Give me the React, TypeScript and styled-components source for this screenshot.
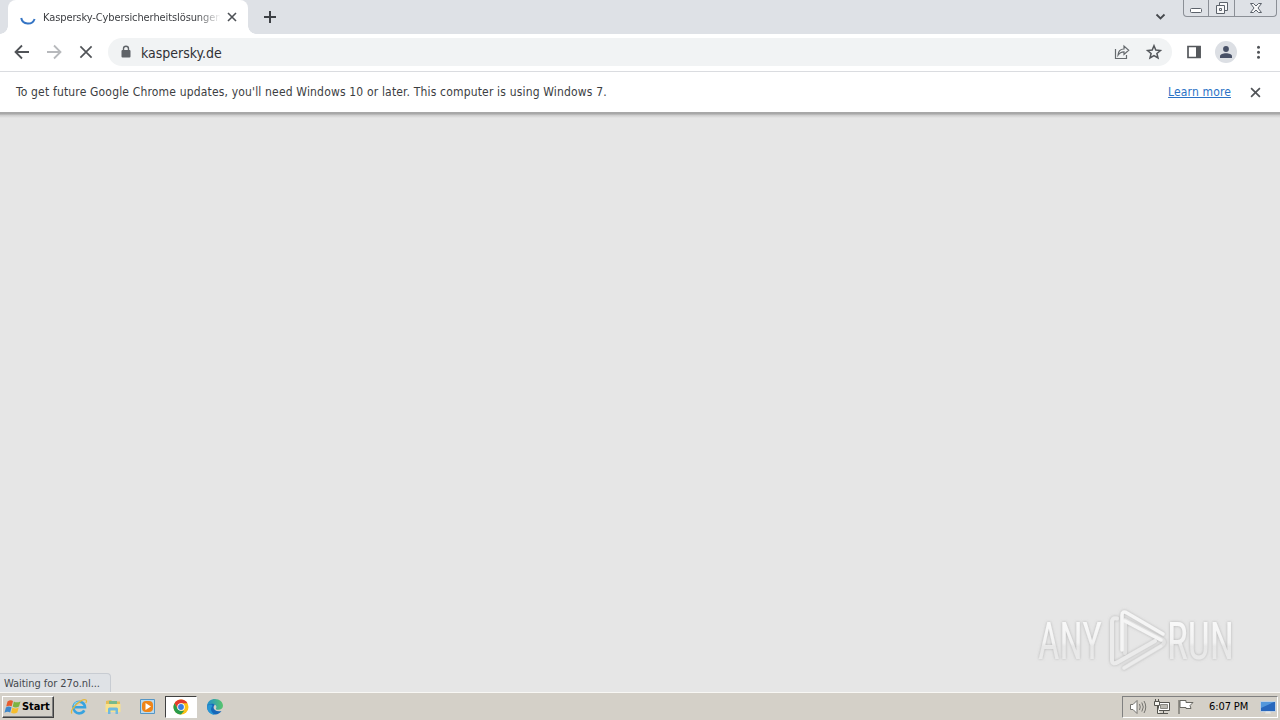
import React from "react";
import styled, { createGlobalStyle } from "styled-components";

const GlobalStyle = createGlobalStyle`
  * {
    box-sizing: border-box;
  }

  body {
    margin: 0;
    overflow: hidden;
    font-family: "DejaVu Sans Condensed", "DejaVu Sans", sans-serif;
    font-stretch: condensed;
  }

  svg {
    display: block;
    flex: none;
  }
`;

const Screen = styled.div`
  display: flex;
  flex-direction: column;
  width: 1280px;
  height: 720px;
  background: #e6e6e6;
`;

const Label = styled.span<{ size: number; spacing: number; color?: string }>`
  font-size: ${({ size }) => size}px;
  letter-spacing: ${({ spacing }) => spacing}px;
  color: ${({ color }) => color || "#3c3e42"};
  line-height: 16px;
  white-space: nowrap;
`;

const TabStrip = styled.header`
  display: flex;
  flex: none;
  height: 34px;
  padding-left: 8px;
  background: #dee1e6;
`;

const Tab = styled.div`
  position: relative;
  display: flex;
  align-items: center;
  width: 240px;
  height: 34px;
  padding: 0 9px 0 12px;
  border-radius: 8px 8px 0 0;
  background: #fff;

  &::before,
  &::after {
    content: "";
    position: absolute;
    bottom: 0;
    width: 8px;
    height: 8px;
  }

  &::before {
    left: -8px;
    background: radial-gradient(circle at 0 0, #dee1e6 7.5px, #fff 8px);
  }

  &::after {
    right: -8px;
    background: radial-gradient(circle at 100% 0, #dee1e6 7.5px, #fff 8px);
  }
`;

const TabTitle = styled.div`
  display: flex;
  flex: none;
  width: 177px;
  margin: 0 7px 0 7px;
  padding-top: 1px;
  overflow: hidden;
  mask-image: linear-gradient(90deg, #000 154px, transparent 178px);
`;

const NewTab = styled.div`
  margin: 10px 0 0 15px;
`;

const TabSearch = styled.div`
  margin: 13px 17px 0 auto;
`;

const WindowButtons = styled.div`
  display: flex;
  width: 94px;
  height: 17px;
  margin-right: 3px;
  border: 1px solid #8b8f96;
  border-top: 0;
  border-radius: 0 0 4px 4px;
`;

const WindowButton = styled.div<{ width: number }>`
  display: flex;
  justify-content: center;
  width: ${({ width }) => width}px;

  & + & {
    border-left: 1px solid #8b8f96;
  }
`;

const Toolbar = styled.nav`
  display: flex;
  flex: none;
  align-items: center;
  height: 38px;
  padding: 0 12px 1px;
  border-bottom: 1px solid #dadce0;
  background: #fff;
`;

const NavButton = styled.div`
  display: flex;
  justify-content: center;
  width: 20px;
  margin-right: 12px;
`;

const Omnibox = styled.div`
  display: flex;
  align-items: center;
  width: 1064px;
  height: 28px;
  padding: 0 9px 0 12px;
  border-radius: 14px;
  background: #f1f3f4;
`;

const Address = styled.div`
  display: flex;
  flex: 1;
  margin-left: 9px;
  padding-top: 2px;
`;

const OmniboxActions = styled.div`
  display: flex;
  gap: 14px;
`;

const ToolbarActions = styled.div`
  display: flex;
  align-items: center;
  margin-left: 14px;
`;

const Avatar = styled.div`
  display: flex;
  align-items: center;
  justify-content: center;
  width: 22px;
  height: 22px;
  margin: 0 14px;
  border-radius: 50%;
  background: #dcdfe4;
`;

const InfoBar = styled.section`
  display: flex;
  flex: none;
  align-items: center;
  justify-content: space-between;
  height: 40px;
  padding: 0 19px 0 16px;
  background: #fff;
`;

const InfoActions = styled.div`
  display: flex;
  align-items: center;
  gap: 19px;
`;

const LearnMore = styled.a`
  color: #2a72c6;
  font-size: 12px;
  letter-spacing: 0.14px;
  line-height: 16px;
  text-decoration: underline;
  white-space: nowrap;
`;

const Page = styled.main`
  display: flex;
  flex: 1;
  flex-direction: column;
  justify-content: flex-end;
  background: linear-gradient(#a8a8a8 0, #a8a8a8 2px, #cbcbcb 3px, #e6e6e6 6px);
`;

const Watermark = styled.div`
  align-self: flex-end;
`;

const StatusBubble = styled.div`
  display: flex;
  align-items: center;
  width: 111px;
  height: 19px;
  padding: 1px 0 0 4px;
  border: 1px solid #c8ccd2;
  border-width: 1px 1px 0 0;
  border-radius: 0 4px 0 0;
  background: #dfe2e6;
`;

const Taskbar = styled.footer`
  display: flex;
  flex: none;
  align-items: center;
  height: 28px;
  padding: 0 2px;
  border-top: 1px solid #f8f7f4;
  background: #d4d0c8;
`;

const StartButton = styled.div`
  display: flex;
  align-items: center;
  width: 52px;
  height: 22px;
  padding-left: 1px;
  border: 1px solid;
  border-color: #fff #404040 #404040 #fff;
  box-shadow: inset -1px -1px #808080;
`;

const StartText = styled.span`
  color: #000;
  font-size: 11px;
  font-weight: 700;
  letter-spacing: -0.1px;
`;

const QuickLaunch = styled.div`
  display: flex;
  margin-left: 8px;
`;

const TaskButton = styled.div<{ active?: boolean }>`
  display: flex;
  align-items: center;
  justify-content: center;
  width: 34px;
  height: 22px;

  ${({ active }) =>
    active &&
    `
    width: 32px;
    margin: 0 1px;
    border: 1px solid;
    border-color: #404040 #fff #fff #404040;
    background: #fff;
  `}
`;

const Tray = styled.div`
  display: flex;
  align-items: center;
  width: 156px;
  height: 22px;
  margin-left: auto;
  padding-left: 6px;
  border: 1px solid;
  border-color: #808080 #fff #fff #808080;
`;

const TrayIcons = styled.div`
  display: flex;
  width: 80px;
  gap: 7px;
`;

const Clock = styled.div`
  display: flex;
  width: 51px;
`;

const CloseIcon = ({ size = 10, color = "#4d5156", width = 1.8 }) => (
  <svg width={size} height={size} viewBox="0 0 10 10" stroke={color} strokeWidth={width}>
    <path d="M1 1l8 8M9 1L1 9" />
  </svg>
);

const Spinner = () => (
  <svg width="16" height="16" viewBox="0 0 16 16" fill="none" stroke="#3474c4" strokeWidth="2">
    <path d="M1.2 9A7 7 0 0 0 14.6 10" />
  </svg>
);

const Arrow = ({ forward }: { forward?: boolean }) => (
  <svg
    width="16"
    height="16"
    viewBox="0 0 16 16"
    fill="none"
    stroke={forward ? "#b7b9bc" : "#505357"}
    strokeWidth="1.8"
  >
    <path d={forward ? "M1 8h13M8 1.5L14.5 8 8 14.5" : "M15 8H2M8 1.5L1.5 8 8 14.5"} />
  </svg>
);

const LockIcon = () => (
  <svg width="12" height="14" viewBox="0 0 12 14">
    <path d="M3.5 6V3.7a2.5 2.5 0 0 1 5 0V6" fill="none" stroke="#5f6368" strokeWidth="1.4" />
    <rect x="1.5" y="5" width="9" height="7.5" rx="1" fill="#5f6368" />
  </svg>
);

const ShareIcon = () => (
  <svg width="18" height="18" viewBox="0 0 18 18" fill="none" stroke="#666a6e" strokeWidth="1.2">
    <path d="M2.5 6v9.5h11V12" />
    <path d="M5 12.2C5.2 8 7.5 6 11 6V3l4.7 4.2L11 11.5V8.8C8.5 8.8 6.5 9.8 5 12.2z" />
  </svg>
);

const StarIcon = () => (
  <svg width="18" height="18" viewBox="0 0 18 18" fill="none" stroke="#53565a" strokeWidth="1.5">
    <path d="M9 2.8l1.8 4.3 4.6.4-3.5 3 1.1 4.5L9 12.6 5 15l1.1-4.5-3.5-3 4.6-.4z" />
  </svg>
);

const SidePanelIcon = () => (
  <svg width="15" height="14" viewBox="0 0 15 14">
    <path d="M2 1.5h12v11H2z" fill="none" stroke="#55585c" strokeWidth="1.7" />
    <path d="M10 1h4.7v12H10z" fill="#55585c" />
  </svg>
);

const PersonIcon = () => (
  <svg width="14" height="14" viewBox="0 0 14 14" fill="#475066">
    <circle cx="7" cy="4" r="2.9" />
    <path d="M1 13v-1.7c0-2 3-3 6-3s6 1 6 3V13z" />
  </svg>
);

const MenuIcon = () => (
  <svg width="14" height="16" viewBox="0 0 14 16" fill="#505357">
    <circle cx="7.5" cy="3.3" r="1.5" />
    <circle cx="7.5" cy="8.3" r="1.5" />
    <circle cx="7.5" cy="13.3" r="1.5" />
  </svg>
);

const AnyRunLogo = () => (
  <svg width="246" height="72" viewBox="0 0 246 72">
    <defs>
      <linearGradient id="letters" x1="0" y1="0" x2="0" y2="1">
        <stop offset="0.2" stopColor="#f8f8f8" />
        <stop offset="0.52" stopColor="#f2f2f2" />
        <stop offset="0.58" stopColor="#e7e7e7" />
        <stop offset="0.9" stopColor="#ebebeb" />
      </linearGradient>
      <filter id="glow" x="-10%" y="-20%" width="120%" height="140%">
        <feDropShadow dx="0" dy="0" stdDeviation="1.7" floodColor="#888" floodOpacity="0.55" />
      </filter>
    </defs>
    <g filter="url(#glow)">
      <g fill="url(#letters)" fontFamily="Roboto, sans-serif" fontSize="51">
        <text x="4" y="58" textLength="64" lengthAdjust="spacingAndGlyphs">
          ANY
        </text>
        <text x="133" y="58" textLength="67" lengthAdjust="spacingAndGlyphs">
          RUN
        </text>
      </g>
      <g fill="none" strokeLinecap="round" strokeLinejoin="round">
        <path d="M83 17.5c-4-1-5 1-5 4V59c0 4 3 4 6 2l37-21" stroke="#ebebeb" strokeWidth="4" />
        <path d="M90 67l37-22c4-3 4-5 0-7L91 19v33" stroke="#e2e2e2" strokeWidth="4" />
        <path d="M88 49V14c0-3 2-4 5-2l36 21M91 20l36 19" stroke="#f5f5f5" strokeWidth="3.5" />
        <path d="M90 67l37-22" stroke="#ececec" strokeWidth="3" />
      </g>
    </g>
  </svg>
);

const WindowsFlag = () => (
  <svg width="18" height="16" viewBox="0 0 17 16">
    <path d="M3 2.5Q6 .5 8.5 2L7.2 7.2Q4.5 6 1.7 7.6z" fill="#e65c2e" />
    <path d="M9.4 2.4Q12 4.2 16 2.4l-1.5 5.2q-3.5 1.8-6.3 0z" fill="#7cb342" />
    <path d="M1.4 8.5Q4 6.8 7 8.3L5.7 13.4Q3 12 0 13.7z" fill="#3d87cb" />
    <path d="M7.9 8.6q3 1.7 6.3 0l-1.4 5q-3.4 1.8-6.2.1z" fill="#f6bd2d" />
  </svg>
);

const ExplorerIcon = () => (
  <svg width="18" height="18" viewBox="0 0 18 18" fill="none">
    <path d="M14.3 12.3A5.8 5.8 0 1 1 15 9.3H5" stroke="#38a3df" strokeWidth="2.6" />
    <path d="M4 7.8A5 5 0 0 1 9 4" stroke="#8bd7f7" strokeWidth="1.2" />
    <path d="M2 15.5C-1 12 12-.5 16 2c1 .7.4 2-.2 3" stroke="#e4b83e" strokeWidth="1.3" />
  </svg>
);

const FolderIcon = () => (
  <svg width="18" height="18" viewBox="0 0 18 18">
    <path d="M2 3l5-1 1.5 1.5H16V14H2z" fill="#e5bd57" />
    <path d="M5 3h8v4H5z" fill="#78b98b" />
    <path d="M1.5 6h15v8h-15z" fill="#f8e28e" />
    <path d="M4 16v-5q0-1.5 1.5-1.5h7Q14 9.5 14 11v5h-2.5v-3.5h-5V16z" fill="#70b9df" />
  </svg>
);

const MediaIcon = () => (
  <svg width="18" height="18" viewBox="0 0 18 18">
    <path d="M2.5 1.5h14v14h-14z" fill="#b9daf0" stroke="#5596c5" />
    <rect x="4" y="3" width="11" height="11" rx="4" fill="#ef8519" />
    <path d="M7.5 5l5.5 3.5L7.5 12z" fill="#fff" />
  </svg>
);

const ChromeIcon = () => (
  <svg width="16" height="16" viewBox="0 0 16 16">
    <circle cx="8" cy="8" r="7.5" fill="#fbc116" />
    <path d="M1.5 4.2A7.5 7.5 0 0 1 14.5 4.2H8L4.8 9.9z" fill="#e33b2e" />
    <path d="M1.5 4.2l3.3 5.7L8 11.7h3.2L8 15.5A7.5 7.5 0 0 1 1.5 4.2z" fill="#299b4b" />
    <circle cx="8" cy="8" r="3.8" fill="#fff" />
    <circle cx="8" cy="8" r="2.9" fill="#397de1" />
  </svg>
);

const EdgeIcon = () => (
  <svg width="18" height="18" viewBox="0 0 18 18">
    <defs>
      <linearGradient id="edgeTop" x1="0" x2="1">
        <stop stopColor="#238fcf" />
        <stop offset="1" stopColor="#58c56b" />
      </linearGradient>
    </defs>
    <path d="M1 9c0-5 5-6 8-3L7.5 9c0 3 3 5 8 4A8 8 0 0 1 1 9z" fill="#1767b8" />
    <path
      d="M1 8C1.4 3.5 4.8 1 9 1c4.7 0 8 3.2 8 6.8 0 2.7-2.2 4-4.5 4-2 0-3-.6-2.5-1.4C11.5 8.2 9 5.8 6 5.8 3.4 5.8 1.5 7 1 8z"
      fill="url(#edgeTop)"
    />
    <path d="M6.5 8c-3 3-1 7 2.7 8.8C4 17 1 13 1.2 8.5 3 6 6 6 6.5 8z" fill="#2796d5" />
  </svg>
);

const SpeakerIcon = () => (
  <svg width="18" height="18" viewBox="0 0 18 18" fill="none" stroke="#74736f">
    <path d="M1.5 6.5H4l4-4v13l-4-4H1.5z" fill="#fff" />
    <path d="M10.5 6q1.5 3 0 6M12.8 4.5q3 4.5 0 9M15 3q3.5 6 0 12" />
  </svg>
);

const NetworkIcon = () => (
  <svg width="16" height="18" viewBox="0 0 16 18" fill="none" stroke="#55544f">
    <path d="M4.5 4.5h11v8h-11z" fill="#fff" />
    <path d="M6.5 6.5h7v4h-7z" fill="#bbb9b2" stroke="#8a8983" />
    <path d="M9.5 13v2M6 15.5h8" />
    <path d="M.5 3.5h5v4h-5zM1.5 1v2M4.5 1v2M3.5 8v7.5H6" fill="#f6f5f0" />
  </svg>
);

const FlagIcon = () => (
  <svg width="18" height="18" viewBox="0 0 18 18" fill="#fff" stroke="#696862">
    <path d="M2 2v14" strokeWidth="1.2" />
    <path d="M3 2.5h6v2h7l-3 3 1 3H9v-1H3z" />
  </svg>
);

const DesktopIcon = () => (
  <svg width="16" height="16" viewBox="0 0 16 16">
    <path d="M.5 2.5h15v10H.5z" fill="#2867bd" stroke="#d9e4ef" strokeWidth=".7" />
    <path d="M1 3h13L1 9z" fill="#5397dc" />
    <path d="M6 12.5h4l1 2H5z" fill="#e5e5e3" />
  </svg>
);

const App: React.FC = () => {
  return (
    <Screen>
      <GlobalStyle />
      <TabStrip>
        <Tab>
          <Spinner />
          <TabTitle>
            <Label size={11} spacing={-0.1}>
              Kaspersky-Cybersicherheitslösungen
            </Label>
          </TabTitle>
          <CloseIcon width={1.6} />
        </Tab>
        <NewTab>
          <svg width="14" height="14" viewBox="0 0 14 14" stroke="#3d4045" strokeWidth="2">
            <path d="M7 1v12M1 7h12" />
          </svg>
        </NewTab>
        <TabSearch>
          <svg width="11" height="8" viewBox="0 0 11 8" fill="none" stroke="#45484d" strokeWidth="1.8">
            <path d="M1.5 1.5l4 4 4-4" />
          </svg>
        </TabSearch>
        <WindowButtons>
          <WindowButton width={24}>
            <svg width="14" height="16" viewBox="0 0 14 16">
              <rect x="1.5" y="8.5" width="11" height="4" rx="1" fill="#fff" stroke="#5c626b" />
            </svg>
          </WindowButton>
          <WindowButton width={26}>
            <svg width="14" height="16" viewBox="0 0 14 16" fill="#f8f8f9" stroke="#5c626b">
              <path d="M4.5 2.5h8v8h-8z" />
              <path d="M1.5 5.5h8v8h-8z" />
              <path d="M4.5 8.5h2v2h-2z" />
            </svg>
          </WindowButton>
          <WindowButton width={42}>
            <svg width="14" height="16" viewBox="0 0 14 16">
              <path
                d="M1.5 3.5h3L7 6l2.5-2.5h3L9 8l3.5 4.5h-3L7 10l-2.5 2.5h-3L5 8z"
                fill="#f8f8f9"
                stroke="#5c626b"
              />
            </svg>
          </WindowButton>
        </WindowButtons>
      </TabStrip>

      <Toolbar>
        <NavButton>
          <Arrow />
        </NavButton>
        <NavButton>
          <Arrow forward />
        </NavButton>
        <NavButton>
          <CloseIcon size={14} color="#505357" width={1.2} />
        </NavButton>
        <Omnibox>
          <LockIcon />
          <Address>
            <Label size={14} spacing={0} color="#303136">
              kaspersky.de
            </Label>
          </Address>
          <OmniboxActions>
            <ShareIcon />
            <StarIcon />
          </OmniboxActions>
        </Omnibox>
        <ToolbarActions>
          <SidePanelIcon />
          <Avatar>
            <PersonIcon />
          </Avatar>
          <MenuIcon />
        </ToolbarActions>
      </Toolbar>

      <InfoBar>
        <Label size={12} spacing={0.168}>
          To get future Google Chrome updates, you'll need Windows 10 or later. This computer is using
          Windows 7.
        </Label>
        <InfoActions>
          <LearnMore>Learn more</LearnMore>
          <CloseIcon size={11} color="#505357" width={1.5} />
        </InfoActions>
      </InfoBar>

      <Page>
        <Watermark>
          <AnyRunLogo />
        </Watermark>
        <StatusBubble>
          <Label size={11} spacing={-0.05} color="#45484d">
            Waiting for 27o.nl...
          </Label>
        </StatusBubble>
      </Page>

      <Taskbar>
        <StartButton>
          <WindowsFlag />
          <StartText>Start</StartText>
        </StartButton>
        <QuickLaunch>
          <TaskButton>
            <ExplorerIcon />
          </TaskButton>
          <TaskButton>
            <FolderIcon />
          </TaskButton>
          <TaskButton>
            <MediaIcon />
          </TaskButton>
          <TaskButton active>
            <ChromeIcon />
          </TaskButton>
          <TaskButton>
            <EdgeIcon />
          </TaskButton>
        </QuickLaunch>
        <Tray>
          <TrayIcons>
            <SpeakerIcon />
            <NetworkIcon />
            <FlagIcon />
          </TrayIcons>
          <Clock>
            <Label size={11} spacing={-0.1} color="#000">
              6:07 PM
            </Label>
          </Clock>
          <DesktopIcon />
        </Tray>
      </Taskbar>
    </Screen>
  );
};

export default App;
